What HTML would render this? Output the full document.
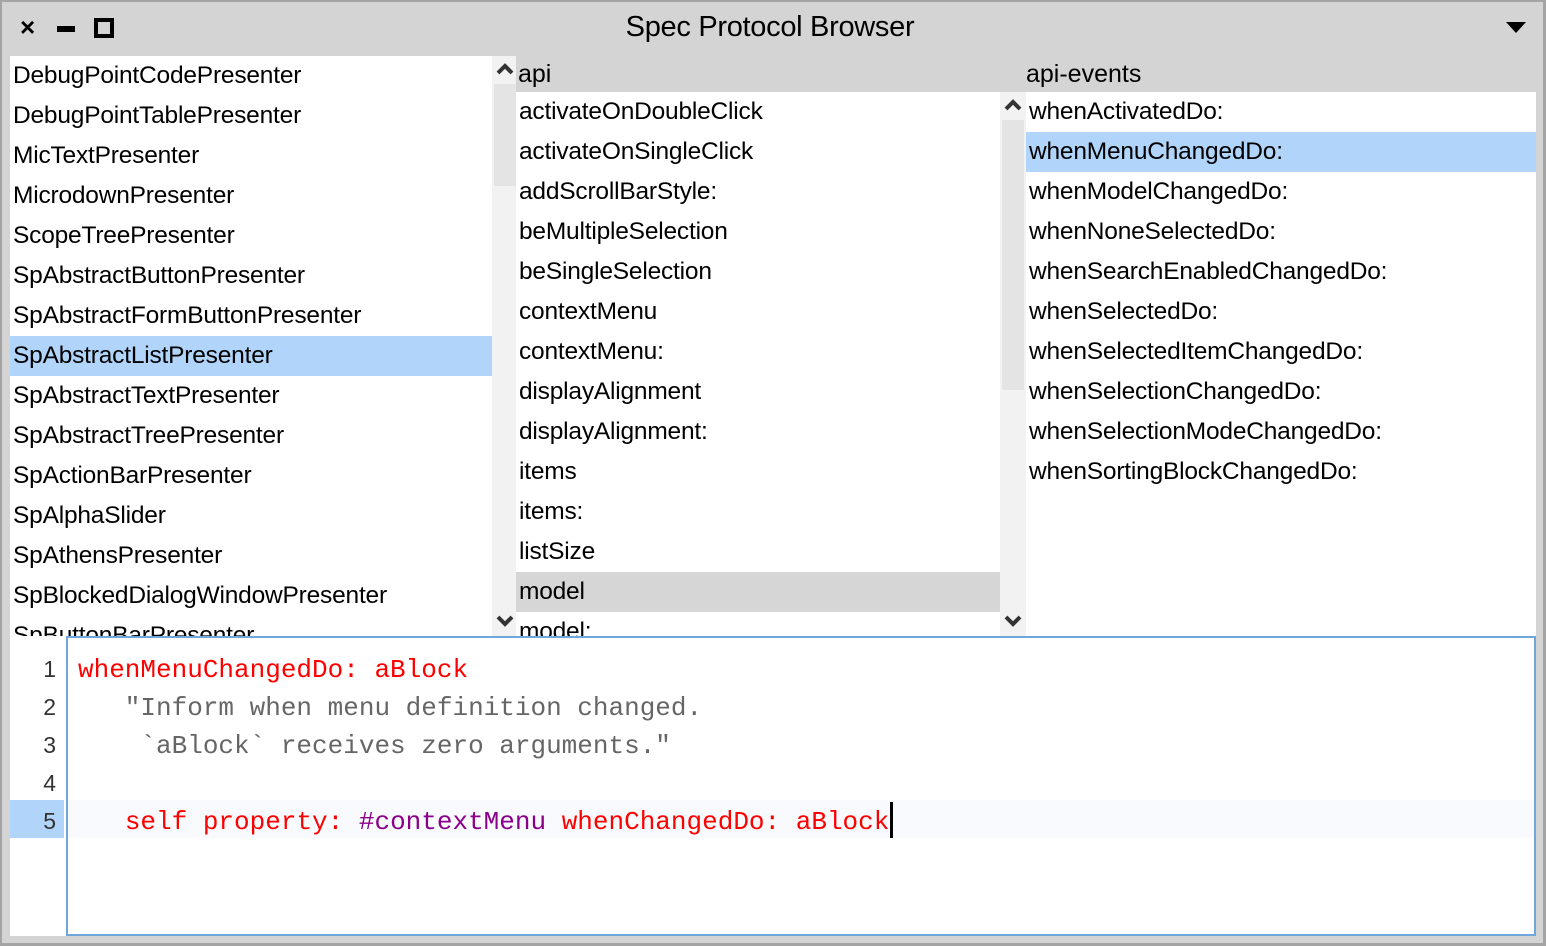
<!DOCTYPE html>
<html><head><style>
*{margin:0;padding:0;box-sizing:border-box}
body{width:1546px;height:946px;background:#d4d4d4;position:relative;overflow:hidden;font-family:"Liberation Sans",sans-serif;}
.win{position:absolute;left:0;top:0;width:1546px;height:946px;border:2px solid #a4a4a4;border-right-width:3px;border-bottom-width:3px}
.abs{position:absolute}
.list{position:absolute;background:#fff;overflow:hidden}
.row{height:40px;line-height:40px;font-size:24.5px;letter-spacing:-0.2px;padding-left:3px;white-space:nowrap;color:#000}
.sel{background:#b0d4fa}
.gsel{background:#d6d6d6}
.code{position:absolute;font-family:"Liberation Mono",monospace;font-size:26px;white-space:pre;line-height:38px}
.r{color:#f00}.p{color:#8a008a}.g{color:#666}
.ln{position:absolute;left:10px;width:54px;text-align:right;padding-right:8px;font-size:23px;color:#333;height:38px;line-height:38px}
</style></head><body>
<div class="win"></div>
<div class="abs" style="left:20px;top:12px;font-size:26px;font-weight:bold">×</div>
<div class="abs" style="left:57px;top:26px;width:18px;height:6px;background:#000"></div>
<div class="abs" style="left:94px;top:18px;width:20px;height:20px;border:4px solid #000"></div>
<div class="abs" style="left:0;width:1540px;top:11px;text-align:center;font-size:29px;letter-spacing:-0.3px">Spec Protocol Browser</div>
<div class="abs" style="left:1506px;top:22px;width:0;height:0;border-left:10px solid transparent;border-right:10px solid transparent;border-top:11px solid #000"></div>

<div class="list" style="left:10px;top:56px;width:482px;height:580px">
<div class="row">DebugPointCodePresenter</div>
<div class="row">DebugPointTablePresenter</div>
<div class="row">MicTextPresenter</div>
<div class="row">MicrodownPresenter</div>
<div class="row">ScopeTreePresenter</div>
<div class="row">SpAbstractButtonPresenter</div>
<div class="row">SpAbstractFormButtonPresenter</div>
<div class="row sel">SpAbstractListPresenter</div>
<div class="row">SpAbstractTextPresenter</div>
<div class="row">SpAbstractTreePresenter</div>
<div class="row">SpActionBarPresenter</div>
<div class="row">SpAlphaSlider</div>
<div class="row">SpAthensPresenter</div>
<div class="row">SpBlockedDialogWindowPresenter</div>
<div class="row">SpButtonBarPresenter</div>
</div>
<div class="abs" style="left:492px;top:56px;width:24px;height:580px;background:#f2f2f2"></div>
<div class="abs" style="left:494px;top:84px;width:22px;height:102px;background:#e4e4e4"></div>
<svg class="abs" style="left:496px;top:62px" width="18" height="14"><path d="M2 11 L9 4 L16 11" stroke="#333" stroke-width="4" fill="none"/></svg>
<svg class="abs" style="left:496px;top:614px" width="18" height="14"><path d="M2 3 L9 10 L16 3" stroke="#333" stroke-width="4" fill="none"/></svg>

<div class="abs" style="left:518px;top:57px;font-size:25px;line-height:34px">api</div>
<div class="abs" style="left:1026px;top:57px;font-size:25px;line-height:34px">api-events</div>

<div class="list" style="left:516px;top:92px;width:484px;height:544px">
<div class="row">activateOnDoubleClick</div>
<div class="row">activateOnSingleClick</div>
<div class="row">addScrollBarStyle:</div>
<div class="row">beMultipleSelection</div>
<div class="row">beSingleSelection</div>
<div class="row">contextMenu</div>
<div class="row">contextMenu:</div>
<div class="row">displayAlignment</div>
<div class="row">displayAlignment:</div>
<div class="row">items</div>
<div class="row">items:</div>
<div class="row">listSize</div>
<div class="row gsel">model</div>
<div class="row">model:</div>
</div>
<div class="abs" style="left:1000px;top:92px;width:26px;height:544px;background:#f2f2f2"></div>
<div class="abs" style="left:1002px;top:120px;width:22px;height:270px;background:#e4e4e4"></div>
<svg class="abs" style="left:1004px;top:98px" width="18" height="14"><path d="M2 11 L9 4 L16 11" stroke="#333" stroke-width="4" fill="none"/></svg>
<svg class="abs" style="left:1004px;top:614px" width="18" height="14"><path d="M2 3 L9 10 L16 3" stroke="#333" stroke-width="4" fill="none"/></svg>

<div class="list" style="left:1026px;top:92px;width:510px;height:544px">
<div class="row">whenActivatedDo:</div>
<div class="row sel">whenMenuChangedDo:</div>
<div class="row">whenModelChangedDo:</div>
<div class="row">whenNoneSelectedDo:</div>
<div class="row">whenSearchEnabledChangedDo:</div>
<div class="row">whenSelectedDo:</div>
<div class="row">whenSelectedItemChangedDo:</div>
<div class="row">whenSelectionChangedDo:</div>
<div class="row">whenSelectionModeChangedDo:</div>
<div class="row">whenSortingBlockChangedDo:</div>
</div>

<div class="abs" style="left:10px;top:636px;width:56px;height:300px;background:#fff"></div>
<div class="abs" style="left:10px;top:800px;width:54px;height:38px;background:#b0d4fa"></div>
<div class="ln" style="top:650px">1</div>
<div class="ln" style="top:688px">2</div>
<div class="ln" style="top:726px">3</div>
<div class="ln" style="top:764px">4</div>
<div class="ln" style="top:802px">5</div>
<div class="abs" style="left:66px;top:636px;width:1470px;height:300px;background:#fff;border:2px solid #6fa6dc"></div>
<div class="abs" style="left:68px;top:800px;width:1466px;height:38px;background:#f8fafd"></div>
<div class="code" style="left:78px;top:651px"><span class="r">whenMenuChangedDo: aBlock</span>
<span class="g">   "Inform when menu definition changed.
    `aBlock` receives zero arguments."</span>

   <span class="r">self property: </span><span class="p">#contextMenu</span><span class="r"> whenChangedDo: aBlock</span></div>
<div class="abs" style="left:890px;top:802px;width:3px;height:36px;background:#000"></div>
</body></html>
